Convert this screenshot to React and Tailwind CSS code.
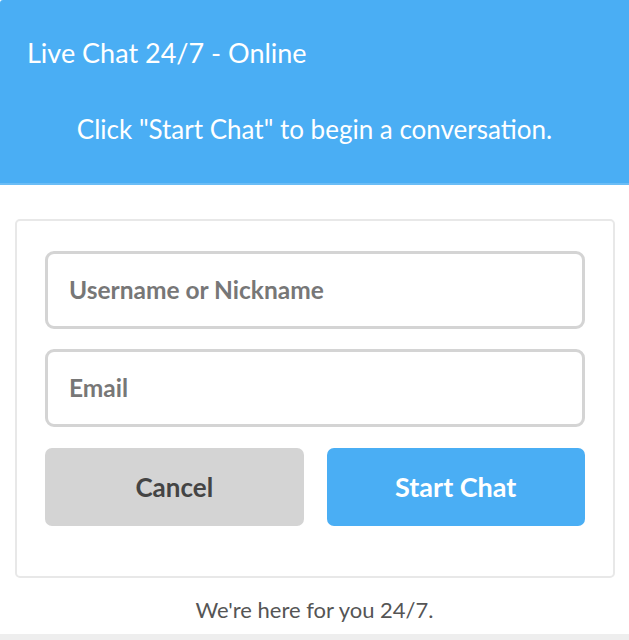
import React from "react";

export default function App() {
  return (
    <div className="w-[629px] h-[640px] bg-white flex flex-col overflow-hidden" style={{ fontFamily: "Lato, 'Open Sans', sans-serif" }}>
      <div className="h-[185px] bg-[#4aaef4] border-b-2 border-[#6bbdf6] rounded-tl-[3px] flex flex-col shrink-0">
        <div className="pl-[27px] pt-[36px] text-white text-[27px] leading-[34px]">Live Chat 24/7 - Online</div>
        <div className="mt-[44px] text-center text-white text-[26px] leading-[30px]">Click "Start Chat" to begin a conversation.</div>
      </div>
      <div className="ml-[15px] w-[600px] mt-[34px] h-[359px] border-2 border-[#e8e8e8] rounded-[5px] px-[28px] pt-[30px] flex flex-col gap-[20px]">
        <div className="h-[78px] border-[3px] border-[#d4d4d4] rounded-[9px] flex items-center pl-[21px] text-[24.5px] font-bold text-[#777777]">Username or Nickname</div>
        <div className="h-[78px] border-[3px] border-[#d4d4d4] rounded-[9px] flex items-center pl-[21px] text-[24.5px] font-bold text-[#777777]">Email</div>
        <div className="flex gap-[23px] mt-[1px]">
          <div className="flex-1 h-[78px] bg-[#d4d4d4] rounded-[7px] flex items-center justify-center text-[26px] font-bold text-[#444444]">Cancel</div>
          <div className="flex-1 h-[78px] bg-[#4aaef4] rounded-[7px] flex items-center justify-center text-[27px] font-bold text-white">Start Chat</div>
        </div>
      </div>
      <div className="mt-[18px] text-center text-[22px] leading-[28px] text-[#555555]">We're here for you 24/7.</div>
      <div className="mt-auto h-[6px] bg-[#eeeeee]"></div>
    </div>
  );
}
